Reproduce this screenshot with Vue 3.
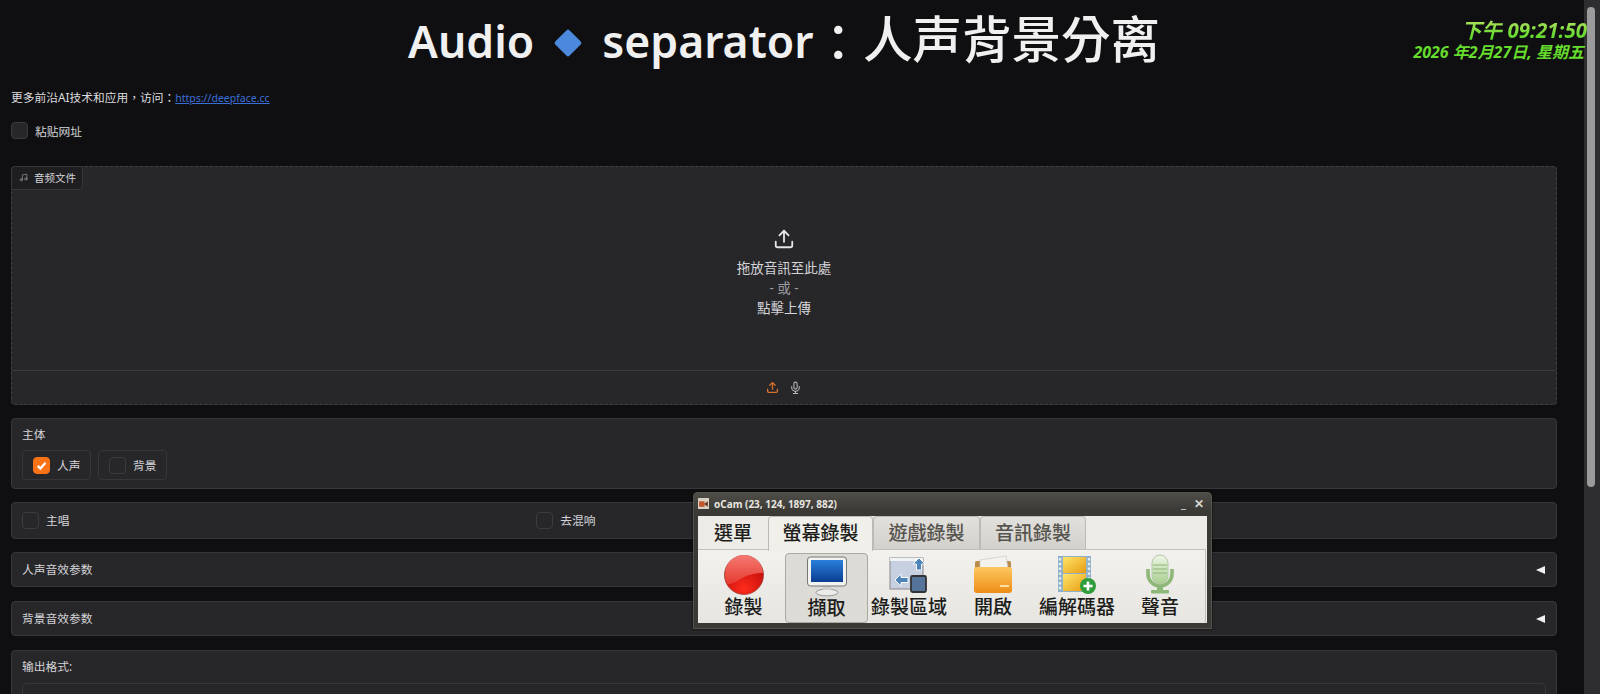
<template>
  <div class="screen">
    <main class="page">
      <h1 class="title"><span class="latin">Audio <span class="diamond"></span> separator</span><span class="colon">：</span>人声背景分离</h1>
      <p class="intro">更多前沿AI技术和应用，访问：<a href="#" class="link">https://deepface.cc</a></p>
      <label class="check-row paste">
        <span class="box"></span>
        <span>粘贴网址</span>
      </label>

      <section class="upload">
        <div class="upload-label">
          <svg viewBox="0 0 24 24" fill="none" stroke="currentColor" stroke-width="1.8" stroke-linecap="round" stroke-linejoin="round">
            <path d="M9 18V5l12-2v13"/>
            <circle cx="6" cy="18" r="3"/>
            <circle cx="18" cy="16" r="3"/>
          </svg>
          <span>音频文件</span>
        </div>
        <div class="drop">
          <svg class="drop-icon" viewBox="0 0 24 24" fill="none" stroke="currentColor" stroke-width="2" stroke-linecap="round" stroke-linejoin="round">
            <path d="M21 15v4a2 2 0 0 1-2 2H5a2 2 0 0 1-2-2v-4"/>
            <polyline points="17 8 12 3 7 8"/>
            <line x1="12" y1="3" x2="12" y2="15"/>
          </svg>
          <div>拖放音訊至此處</div>
          <div class="muted">- 或 -</div>
          <div>點擊上傳</div>
        </div>
        <div class="sources">
          <svg class="src active" viewBox="0 0 24 24" fill="none" stroke="currentColor" stroke-width="2.4" stroke-linecap="round" stroke-linejoin="round">
            <path d="M21 15v4a2 2 0 0 1-2 2H5a2 2 0 0 1-2-2v-4"/>
            <polyline points="17 8 12 3 7 8"/>
            <line x1="12" y1="3" x2="12" y2="15"/>
          </svg>
          <svg class="src" viewBox="0 0 24 24" fill="none" stroke="currentColor" stroke-width="2" stroke-linecap="round" stroke-linejoin="round">
            <path d="M12 2a3 3 0 0 0-3 3v7a3 3 0 0 0 6 0V5a3 3 0 0 0-3-3z"/>
            <path d="M19 10v2a7 7 0 0 1-14 0v-2"/>
            <line x1="12" y1="19" x2="12" y2="23"/>
            <line x1="8" y1="23" x2="16" y2="23"/>
          </svg>
        </div>
      </section>

      <section class="panel stem">
        <div class="panel-title">主体</div>
        <div class="options">
          <label class="option" v-for="o in stems" :key="o.name">
            <span class="box" :class="{ checked: o.checked }">
              <svg v-if="o.checked" viewBox="0 0 12 12"><path d="M3 6.3l2.1 2.1L9.2 3.8" fill="none" stroke="#fff" stroke-width="1.8"/></svg>
            </span>
            <span class="option-text">{{ o.name }}</span>
          </label>
        </div>
      </section>

      <section class="panel flags">
        <label class="check-row"><span class="box"></span><span class="option-text">主唱</span></label>
        <label class="check-row"><span class="box"></span><span class="option-text">去混响</span></label>
        <span></span>
      </section>

      <section class="panel accordion" v-for="a in accordions" :key="a">
        <span class="option-text">{{ a }}</span>
        <span class="arrow"></span>
      </section>

      <section class="panel format">
        <div class="panel-title">输出格式:</div>
        <div class="select"></div>
      </section>
    </main>

    <aside class="scrollbar"><div class="thumb"></div></aside>

    <div class="clock">
      <div class="clock-time">下午 09:21:50</div>
      <div class="clock-date">2026 年2月27日, 星期五</div>
    </div>

    <div class="ocam">
      <div class="ocam-bar">
        <svg class="ocam-logo" viewBox="0 0 10 10">
          <rect width="10" height="10" fill="#d9d0c4"/>
          <rect x="1" y="3" width="5" height="5" fill="#c0562a"/>
          <path d="M6 5l3-2v5L6 6z" fill="#6a3a22"/>
        </svg>
        <span class="ocam-name">oCam (23, 124, 1897, 882)</span>
        <span class="ocam-btns"><span>_</span><span class="close">✕</span></span>
      </div>
      <div class="ocam-body">
        <div class="tabs">
          <div class="tab plain">選單</div>
          <div class="tab current">螢幕錄製</div>
          <div class="tab">遊戲錄製</div>
          <div class="tab last">音訊錄製</div>
        </div>
        <div class="tools">
          <div class="tool" style="width:83px">
            <svg viewBox="0 0 44 44" class="tool-icon">
              <defs>
                <radialGradient id="rec" cx="50%" cy="85%" r="75%">
                  <stop offset="0" stop-color="#ff2a1c"/>
                  <stop offset="1" stop-color="#b80c08"/>
                </radialGradient>
                <linearGradient id="recTop" x1="0" y1="0" x2="0" y2="1">
                  <stop offset="0" stop-color="#f47a72"/>
                  <stop offset="1" stop-color="#e63a30"/>
                </linearGradient>
              </defs>
              <circle cx="22" cy="22" r="19.5" fill="url(#rec)" stroke="#9c4038" stroke-width=".8"/>
              <path d="M3 22a19 19 0 0 1 38-2c-10 0-16 2-24 7-5 3-10 5-12 4-1-3-2-6-2-9z" fill="url(#recTop)"/>
            </svg>
            <span>錄製</span>
          </div>
          <div class="tool pressed" style="width:83px">
            <svg viewBox="0 0 44 44" class="tool-icon">
              <defs>
                <linearGradient id="scr" x1="0" y1="0" x2="0" y2="1">
                  <stop offset="0" stop-color="#2a80dc"/>
                  <stop offset="1" stop-color="#0b3d92"/>
                </linearGradient>
              </defs>
              <ellipse cx="22" cy="38.5" rx="11" ry="3.4" fill="#ececea" stroke="#999"/>
              <rect x="18" y="30" width="8" height="6" fill="#cfcfcd"/>
              <rect x="2.5" y="3" width="39" height="29" rx="3" fill="#f2f2f0" stroke="#777"/>
              <rect x="6" y="6" width="32" height="22" fill="url(#scr)"/>
            </svg>
            <span>擷取</span>
          </div>
          <div class="tool" style="width:82px">
            <svg viewBox="0 0 44 44" class="tool-icon">
              <rect x="3" y="5" width="33" height="31" fill="#c6d0e0" stroke="#888"/>
              <rect x="3" y="5" width="33" height="3" fill="#f0f2f4"/>
              <path d="M32 5l6 6h-3.500v6h-5v-6H26z" fill="#4f84b8" stroke="#fff" stroke-width=".9"/>
              <path d="M8 27l6-6v3.500h7v5h-7V33z" fill="#4f84b8" stroke="#fff" stroke-width=".9"/>
              <rect x="24" y="23" width="15" height="16" rx="1.500" fill="#56739a" stroke="#333" stroke-width="1.800"/>
            </svg>
            <span>錄製區域</span>
          </div>
          <div class="tool" style="width:86px">
            <svg viewBox="0 0 44 44" class="tool-icon">
              <defs>
                <linearGradient id="fld" x1="0" y1="0" x2="0" y2="1">
                  <stop offset="0" stop-color="#fdc860"/>
                  <stop offset="1" stop-color="#ee8c16"/>
                </linearGradient>
              </defs>
              <path d="M4 10a2 2 0 0 1 2-2h32a2 2 0 0 1 2 2v8H4z" fill="#b98a4a"/>
              <path d="M9 7l26-4 2 12H9z" fill="#f4f2ec" stroke="#c4c4c0" stroke-width=".6"/>
              <rect x="3" y="14" width="38" height="26" rx="3" fill="url(#fld)"/>
              <rect x="29" y="32" width="9" height="2" fill="#fde0a8"/>
            </svg>
            <span>開啟</span>
          </div>
          <div class="tool" style="width:82px">
            <svg viewBox="0 0 44 44" class="tool-icon">
              <defs>
                <linearGradient id="film" x1="0" y1="0" x2="1" y2="1">
                  <stop offset="0" stop-color="#fde56a"/>
                  <stop offset="1" stop-color="#e89c12"/>
                </linearGradient>
              </defs>
              <rect x="3" y="3" width="33" height="36" fill="#8fb0c8"/>
              <path d="M5 5v32M34 5v32" stroke="#e4edf2" stroke-width="2.400" stroke-dasharray="2.400 2.400"/>
              <rect x="8" y="4" width="23" height="16" fill="url(#film)"/>
              <rect x="8" y="21" width="23" height="17" fill="url(#film)"/>
              <circle cx="33" cy="33" r="8" fill="#2f9c3c"/>
              <path d="M33 28.500v9M28.500 33h9" stroke="#fff" stroke-width="2.600"/>
            </svg>
            <span>編解碼器</span>
          </div>
          <div class="tool" style="width:84px">
            <svg viewBox="0 0 44 44" class="tool-icon">
              <defs>
                <linearGradient id="mic" x1="0" y1="0" x2="0" y2="1">
                  <stop offset="0" stop-color="#eef5e8"/>
                  <stop offset="1" stop-color="#a8cf8e"/>
                </linearGradient>
              </defs>
              <path d="M10 16v5a12 12 0 0 0 24 0v-5" fill="none" stroke="#8eb878" stroke-width="3.600"/>
              <rect x="14" y="2" width="16" height="29" rx="8" fill="url(#mic)" stroke="#b5c8a8"/>
              <path d="M15 12h14M15 16h14M15 20h14" stroke="#8cb474" stroke-width="1.200"/>
              <rect x="19" y="33" width="6" height="6" fill="#8eb878"/>
              <rect x="13" y="37" width="18" height="3.500" rx="1" fill="#8eb878"/>
            </svg>
            <span>聲音</span>
          </div>
        </div>
      </div>
    </div>
  </div>
</template>

<script setup>
const stems = [
  { name: '人声', checked: true },
  { name: '背景', checked: false }
]
const accordions = ['人声音效参数', '背景音效参数']
</script>

<style>
html, body {
  margin: 0;
  height: 100%;
  overflow: hidden;
  background: #0f0f11;
}
</style>

<style scoped>
.screen {
  position: relative;
  display: flex;
  height: 694px;
  overflow: hidden;
  background: #0f0f11;
  color: #e8e8ea;
  font-family: "Noto Sans", "Noto Sans CJK TC", sans-serif;
  font-size: 11.75px;
}

.page {
  flex: 1;
  min-width: 0;
  padding: 0 27px 0 11px;
}

.title {
  margin: 0;
  padding-top: 5px;
  height: 76px;
  box-sizing: border-box;
  text-align: center;
  font-size: 49.5px;
  font-weight: 500;
  line-height: 68px;
  color: #f0f0f1;
  white-space: nowrap;
}

.latin {
  font-size: 44.5px;
  font-weight: 600;
}

.colon {
  position: relative;
  top: 3px;
}

.diamond {
  display: inline-block;
  width: 20px;
  height: 20px;
  margin: 0 13px 6px 12px;
  background: #4a89dc;
  transform: rotate(45deg);
  border-radius: 2px;
  vertical-align: middle;
}

.intro {
  margin: 0;
  padding-top: 13px;
  line-height: 17px;
  height: 32px;
  color: #dcdcde;
}

.link {
  color: #3b6fd8;
  font-family: "Noto Sans", sans-serif;
  font-size: 10.5px;
}

.box {
  flex: none;
  box-sizing: border-box;
  display: flex;
  width: 17px;
  height: 17px;
  background: #27272a;
  border: 1px solid #3c3c40;
  border-radius: 4px;
}

.box.checked {
  background: #f97316;
  border-color: #f97316;
}

.check-row {
  display: flex;
  align-items: center;
  gap: 7px;
}

.option-text {
  position: relative;
  top: -1px;
}

.paste {
  height: 17px;
  margin-top: 1px;
  color: #d4d4d8;
}

.upload {
  margin-top: 27px;
  height: 239px;
  box-sizing: border-box;
  display: flex;
  flex-direction: column;
  position: relative;
  background: #27272a;
  border: 1px dashed #3f3f46;
  border-radius: 4px;
}

.upload-label {
  position: absolute;
  top: -1px;
  left: -1px;
  display: flex;
  align-items: center;
  gap: 6px;
  height: 21px;
  padding: 0 6px 1px 7px;
  font-size: 10.5px;
  background: #1e1e21;
  border: 1px solid #36363b;
  border-radius: 4px 0 4px 0;
  color: #d4d4d8;
}

.upload-label svg {
  width: 9px;
  height: 9px;
  color: #9c9ca3;
}

.drop {
  flex: 1;
  display: flex;
  flex-direction: column;
  align-items: center;
  justify-content: center;
  padding-top: 8px;
  line-height: 20px;
  font-size: 13.5px;
  color: #d4d4d8;
}

.drop-icon {
  width: 22px;
  height: 22px;
  margin-bottom: 8px;
  color: #e4e4e7;
}

.muted {
  color: #9c9ca3;
}

.sources {
  height: 33px;
  flex: none;
  display: flex;
  align-items: center;
  justify-content: center;
  gap: 10px;
  border-top: 1px solid #3a3a3f;
}

.src {
  width: 13px;
  height: 13px;
  color: #b4b4ba;
}

.src.active {
  color: #d8722a;
}

.panel {
  box-sizing: border-box;
  background: #27272a;
  border: 1px solid #36363b;
  border-radius: 4px;
  padding: 0 10px;
  color: #d4d4d8;
}

.stem {
  margin-top: 13px;
  height: 71px;
  padding-top: 7px;
}

.panel-title {
  line-height: 16px;
}

.options {
  display: flex;
  gap: 7px;
  margin-top: 8px;
}

.option {
  display: flex;
  align-items: center;
  gap: 7px;
  box-sizing: border-box;
  width: 69px;
  height: 30px;
  padding-left: 10px;
  border: 1px solid #36363b;
  border-radius: 4px;
}

.flags {
  margin-top: 13px;
  height: 37px;
  display: grid;
  grid-template-columns: repeat(3, 1fr);
  align-items: center;
  column-gap: 19px;
}

.accordion {
  margin-top: 13px;
  height: 35px;
  display: flex;
  align-items: center;
  justify-content: space-between;
  padding-right: 11px;
}

.accordion + .accordion {
  margin-top: 14px;
}

.arrow {
  width: 0;
  height: 0;
  border-top: 4.5px solid transparent;
  border-bottom: 4.5px solid transparent;
  border-right: 9px solid #f0f0f2;
}

.format {
  margin-top: 14px;
  height: 120px;
  padding-top: 7px;
}

.select {
  margin-top: 9px;
  height: 60px;
  background: #27272a;
  border: 1px solid #36363b;
  border-radius: 4px;
}

.scrollbar {
  flex: none;
  width: 16px;
  background: #2e2e30;
  position: relative;
}

.thumb {
  margin: 7px 0 0 3px;
  width: 8px;
  height: 480px;
  border-radius: 4px;
  background: #9b9b9b;
}

.clock {
  position: absolute;
  top: 19px;
  right: 13px;
  text-align: right;
  font-style: italic;
  font-weight: 700;
}

.clock-time {
  font-size: 20.5px;
  line-height: 23px;
  background: linear-gradient(180deg, #b6e060, #48d820);
  -webkit-background-clip: text;
  background-clip: text;
  color: transparent;
}

.clock-date {
  font-size: 16px;
  line-height: 20px;
  padding-right: 3px;
  color: #66dc2c;
}

.ocam {
  position: absolute;
  left: 693px;
  top: 492px;
  width: 519px;
  height: 137px;
  box-sizing: border-box;
  padding: 0 4px 4px;
  background: linear-gradient(180deg, #4f4d48 0, #3a3935 18px, #3a3935 100%);
  border: 1px solid #55534e;
  border-radius: 4px 4px 0 0;
  color: #1d1d1b;
  box-shadow: 0 0 2px #000;
}

.ocam-bar {
  height: 23px;
  display: flex;
  align-items: center;
  gap: 5px;
  color: #e8e6e0;
  font-size: 10px;
  font-weight: 700;
  padding-bottom: 2px;
  box-sizing: border-box;
}

.ocam-logo {
  width: 11px;
  height: 11px;
}

.ocam-btns {
  margin-left: auto;
  display: flex;
  gap: 8px;
  padding-right: 3px;
  font-size: 12px;
  color: #d8d6d0;
}

.ocam-body {
  height: 107px;
  background: #ecebe6;
  display: flex;
  flex-direction: column;
}

.tabs {
  display: flex;
  height: 33px;
  font-size: 19px;
  font-family: "Noto Sans CJK TC", sans-serif;
  font-weight: 500;
}

.tab {
  display: flex;
  align-items: center;
  justify-content: center;
  box-sizing: border-box;
  width: 107px;
  height: 33px;
  padding-bottom: 3px;
  color: #55534e;
  background: linear-gradient(180deg, #e2e0dc, #d2d0cb);
  border: 1px solid #bcbab5;
  border-bottom: 0;
  border-radius: 4px 4px 0 0;
}

.tab.plain {
  width: 70px;
  color: #1d1d1b;
  background: transparent;
  border: 0;
}

.tab.current {
  width: 105px;
  color: #1d1d1b;
  height: 35px;
  padding-bottom: 5px;
  position: relative;
  z-index: 1;
  background: #f0efea;
}

.tab.last {
  width: 106px;
}

.tools {
  flex: 1;
  display: flex;
  align-items: flex-end;
  padding-left: 4px;
  margin-right: 1px;
  box-sizing: border-box;
  background: linear-gradient(180deg, #f2f1ee, #e6e5e0);
  border: 1px solid #c2c0bb;
  border-left: 0;
  border-bottom: 0;
  font-family: "Noto Sans CJK TC", sans-serif;
  font-size: 19px;
  font-weight: 500;
  line-height: 21px;
}

.tool {
  flex: none;
  height: 70px;
  box-sizing: border-box;
  display: flex;
  flex-direction: column;
  align-items: center;
  white-space: nowrap;
}

.tool-icon {
  width: 44px;
  height: 44px;
  flex: none;
  margin-bottom: -2px;
}

.tool.pressed {
  background: #dcdbd6;
  border: 1px solid #aaa8a3;
  border-radius: 4px;
}
</style>
